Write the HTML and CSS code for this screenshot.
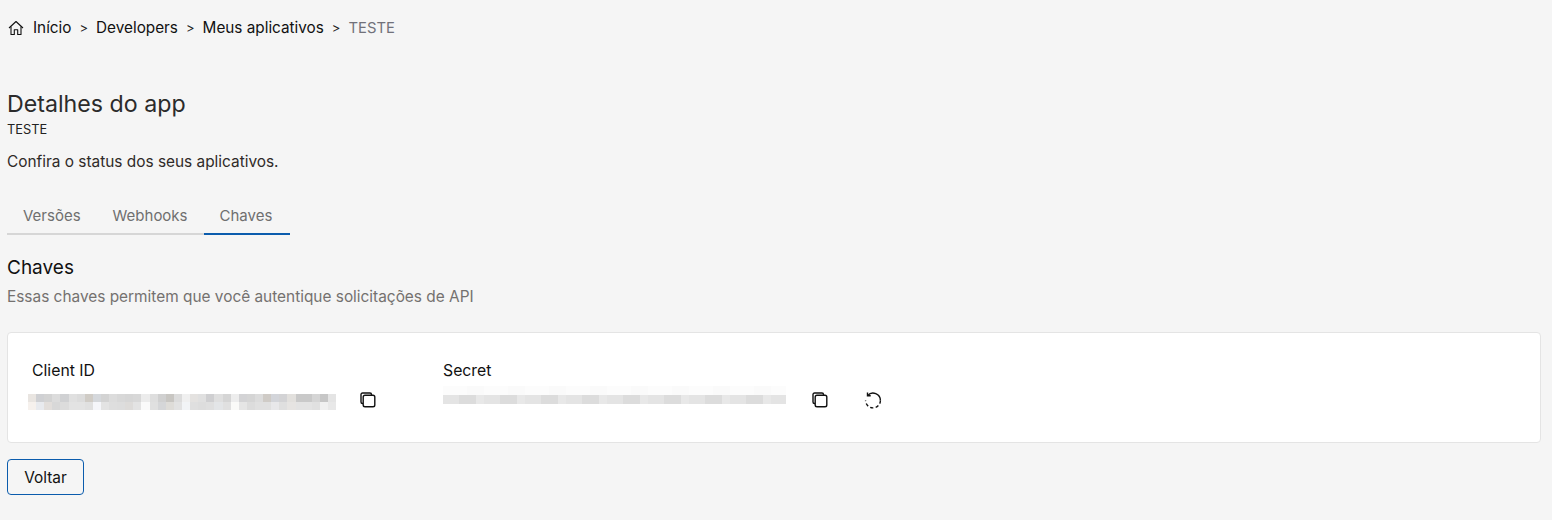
FILE: index.html
```html
<!DOCTYPE html>
<html>
<head>
    <title>Detalhes do app</title>
    <link rel="stylesheet" href="styles.css">
</head>
<body>

    <!-- Breadcrumb -->
    <nav class="breadcrumb">
        <svg class="home-icon" viewBox="0 0 16 16" width="16" height="16" fill="none" stroke="#111" stroke-width="1.1" stroke-linejoin="round">
            <path d="M1 8 8 1.5 15 8"/>
            <path d="M3 6.5V14.5H6.3V9.8H9.7V14.5H13V6.5"/>
        </svg>
        <a>Início</a>
        <span class="sep">&gt;</span>
        <a>Developers</a>
        <span class="sep">&gt;</span>
        <a>Meus aplicativos</a>
        <span class="sep">&gt;</span>
        <span class="current">TESTE</span>
    </nav>

    <!-- Header -->
    <h1>Detalhes do app</h1>
    <div class="app-name">TESTE</div>
    <p class="intro">Confira o status dos seus aplicativos.</p>

    <!-- Tabs -->
    <div class="tabs">
        <div class="tab">Versões</div>
        <div class="tab">Webhooks</div>
        <div class="tab active">Chaves</div>
    </div>

    <h2>Chaves</h2>
    <p class="subtitle">Essas chaves permitem que você autentique solicitações de API</p>

    <!-- Keys -->
    <div class="card">
        <div class="key key-client">
            <div class="key-label">Client ID</div>
            <div class="key-row">
                <div class="mask mask-client"></div>
                <button class="icon-btn copy-client" aria-label="Copiar">
                    <svg viewBox="0 0 20 20" width="20" height="20" fill="none" stroke="#111" stroke-width="1.4">
                        <path d="M5 13.5H4.5A1.5 1.5 0 0 1 3 12V4.5A1.5 1.5 0 0 1 4.5 3H12A1.5 1.5 0 0 1 13.5 4.5V5"/>
                        <rect x="5.2" y="5.2" width="11.6" height="11.6" rx="1.8"/>
                    </svg>
                </button>
            </div>
        </div>
        <div class="key key-secret">
            <div class="key-label">Secret</div>
            <div class="key-row">
                <div class="mask mask-secret"></div>
                <button class="icon-btn copy-secret" aria-label="Copiar">
                    <svg viewBox="0 0 20 20" width="20" height="20" fill="none" stroke="#111" stroke-width="1.4">
                        <path d="M5 13.5H4.5A1.5 1.5 0 0 1 3 12V4.5A1.5 1.5 0 0 1 4.5 3H12A1.5 1.5 0 0 1 13.5 4.5V5"/>
                        <rect x="5.2" y="5.2" width="11.6" height="11.6" rx="1.8"/>
                    </svg>
                </button>
                <button class="icon-btn refresh" aria-label="Gerar novamente">
                    <svg viewBox="0 0 20 20" width="20" height="20" fill="none" stroke="#111" stroke-width="1.4">
                        <path d="M4.7 5.4A7.4 7.4 0 0 1 17.4 10.5"/>
                        <path d="M17.4 10.5A7.4 7.4 0 0 1 2.6 10.5" stroke-dasharray="3.2 2.4"/>
                        <path d="M4.5 2.6V5.8H7.7"/>
                    </svg>
                </button>
            </div>
        </div>
    </div>

    <button class="btn-back">Voltar</button>

</body>
</html>
```

FILE: styles.css
```css
* {
    box-sizing: border-box;
}

html, body {
    height: 100%;
}

body {
    margin: 0;
    padding: 0 11px 0 7px;
    background: #f5f5f5;
    color: #111;
    font-family: "Inter", "Liberation Sans", sans-serif;
    font-size: 15.4px;
    overflow: hidden;
}

.breadcrumb {
    display: flex;
    align-items: center;
    height: 20px;
    margin-top: 18px;
    font-size: 15.3px;
    line-height: 20px;
}

.home-icon {
    margin: -1px 9px 0 1px;
}

.sep {
    margin: 0 8px;
    font-size: 13px;
    color: #222;
}

.current {
    color: #71717a;
    font-size: 14.8px;
}

h1 {
    margin: 52px 0 0;
    font-size: 23.2px;
    line-height: 28px;
    font-weight: 400;
    color: #2b2b2b;
}

.app-name {
    margin-top: 4px;
    font-size: 12.8px;
    line-height: 16px;
    color: #222;
}

.intro {
    margin: 14px 0 0;
    line-height: 20px;
    color: #2f2a28;
}

.tabs {
    display: flex;
    margin-top: 24px;
}

.tab {
    height: 39px;
    padding: 10px 16px 0;
    font-size: 15px;
    line-height: 20px;
    color: #6f6f6f;
    border-bottom: 2px solid #d6d6d6;
}

.tab.active {
    padding-right: 18px;
    border-bottom-color: #0b5cad;
}

h2 {
    margin: 21px 0 0;
    font-size: 19px;
    line-height: 24px;
    font-weight: 400;
    color: #111;
}

.subtitle {
    margin: 7px 0 0;
    line-height: 20px;
    color: #74716f;
}

.card {
    display: flex;
    height: 111px;
    margin-top: 25px;
    background: #fff;
    border: 1px solid #e4e4e4;
    border-radius: 4px;
}

.key-label {
    margin-top: 28px;
    font-size: 15.8px;
    line-height: 20px;
}

.key-client {
    width: 435px;
    padding-left: 24px;
}

.key-row {
    display: flex;
    align-items: center;
    height: 20px;
    margin-top: 9px;
}

.key-client .key-row {
    margin-left: -4px;
}

/* blurred values, two rows of pixel blocks */
.mask-client {
    width: 308px;
    height: 16px;
    margin-top: 4px;
    background:
        linear-gradient(90deg, #e9e5e1 0 8px, #cfd0d3 8px 16px, #d3d3d3 16px 24px, #dcdcdc 24px 32px, #d0d1d3 32px 41px, #e0e0e0 41px 49px, #dcdcdc 49px 57px, #d0ccc6 57px 65px, #d5d8dc 65px 73px, #d3d3d3 73px 81px, #dcdcdc 81px 89px, #d8d8d8 89px 97px, #d6d6d6 97px 105px, #d8d8d8 105px 113px, #ececec 113px 122px, #dedede 122px 130px, #d0d0d0 130px 138px, #c8c6c2 138px 146px, #dcdcdc 146px 154px, #f0f0f0 154px 162px, #e4e2e0 162px 170px, #e0e0e0 170px 178px, #cfcfd1 178px 186px, #dfdfdf 186px 195px, #d5d5d5 195px 203px, #ededed 203px 211px, #d3d3d5 211px 219px, #d5d5d5 219px 227px, #dcdcdc 227px 235px, #cfcbc6 235px 243px, #d3d5da 243px 251px, #d3d3d5 251px 259px, #e2e0dd 259px 268px, #c9c9c9 268px 284px, #d5d5d5 284px 292px, #c6c6c6 292px 300px, #e4e4e4 300px 308px) 0 0 / 100% 8px no-repeat,
        linear-gradient(90deg, #f6f1ed 0 8px, #e8eaee 8px 16px, #e2dedb 16px 24px, #d8d8d8 24px 32px, #dcdcdc 32px 41px, #e3e3e3 41px 57px, #e0e0e0 57px 65px, #f5f6fa 65px 73px, #e3e3e3 73px 81px, #dedede 81px 89px, #dddddd 89px 97px, #dddbd9 97px 105px, #e3e3e3 105px 113px, #fafafa 113px 122px, #e0e0e0 122px 130px, #d5d6d8 130px 138px, #dedcd8 138px 146px, #e2e2e2 146px 154px, #f2f4f6 154px 162px, #dfdfdf 162px 170px, #dddddd 170px 178px, #dfdfdf 178px 186px, #e3e5e7 186px 195px, #e0e0e0 195px 203px, #fafaf8 203px 211px, #e5e5e5 211px 219px, #dcdcdc 219px 227px, #e0e0e0 227px 243px, #e8e8ea 243px 251px, #dfdfdf 251px 259px, #e6e4e2 259px 268px, #e3e3e3 268px 284px, #e0e0e0 284px 292px, #f0f0f0 292px 300px, #e8e8e8 300px 308px) 0 8px / 100% 8px no-repeat;
}

.mask-secret {
    width: 343px;
    height: 18px;
    margin-bottom: 10px;
    background:
        repeating-linear-gradient(90deg, #fcfcfc 0 24px, #fafafa 24px 41px) 0 0 / 100% 9px no-repeat,
        repeating-linear-gradient(90deg, #e4e4e4 0 16px, #dcdcdc 16px 33px, #e8e8e8 33px 41px) 0 9px / 100% 9px no-repeat;
}

.icon-btn {
    display: flex;
    width: 20px;
    height: 20px;
    padding: 0;
    border: none;
    background: none;
}

.copy-client {
    margin-left: 22px;
}

.copy-secret {
    margin-left: 24px;
}

.refresh {
    margin-left: 33px;
}

.btn-back {
    display: block;
    width: 77px;
    height: 36px;
    margin-top: 16px;
    background: transparent;
    border: 1px solid #0b5cad;
    border-radius: 4px;
    font-family: inherit;
    font-size: 15.4px;
    color: #111;
}
```
